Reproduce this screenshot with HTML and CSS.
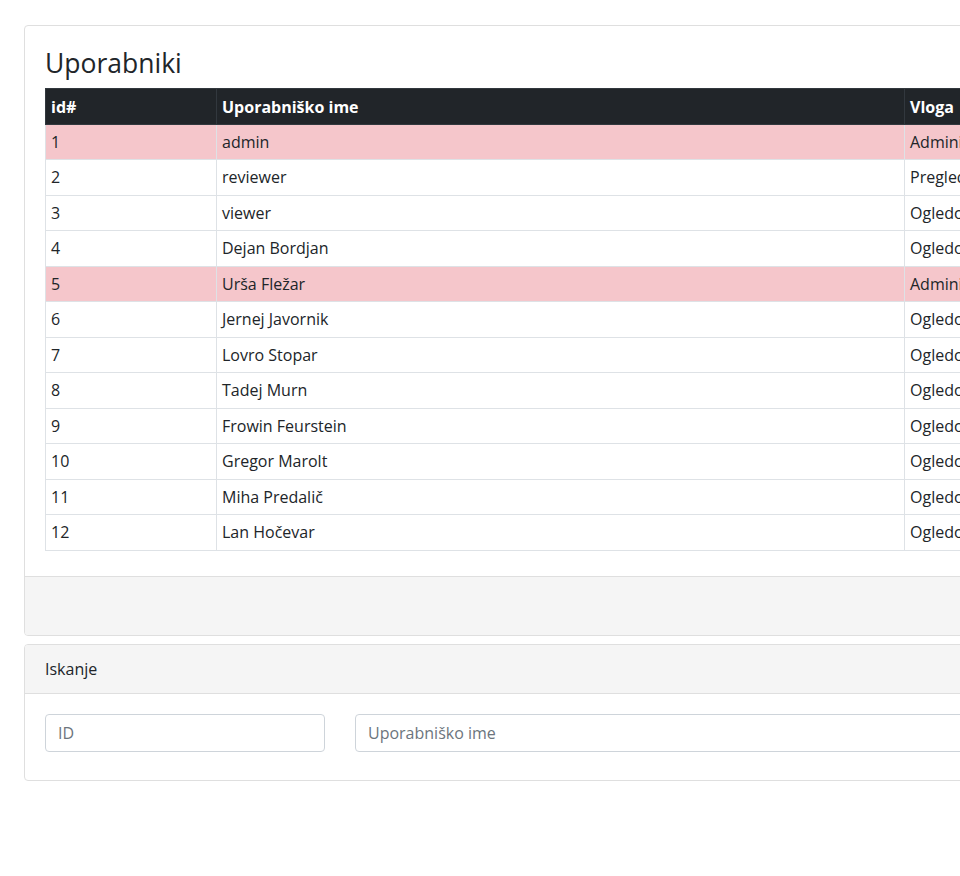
FILE: index.html
```html
<!DOCTYPE html>
<html lang="sl">
<head>
<meta charset="utf-8">
<title>Uporabniki</title>
<link rel="stylesheet" href="styles.css">
</head>
<body>
<div class="page">
  <div class="card">
    <div class="card-body">
      <h3 class="title">Uporabniki</h3>
      <table class="table">
        <colgroup>
          <col class="c-id">
          <col class="c-name">
          <col class="c-role">
        </colgroup>
        <thead>
          <tr><th>id#</th><th>Uporabniško ime</th><th>Vloga</th></tr>
        </thead>
        <tbody>
          <tr class="danger"><td>1</td><td>admin</td><td>Administrator</td></tr>
          <tr><td>2</td><td>reviewer</td><td>Pregledovalec</td></tr>
          <tr><td>3</td><td>viewer</td><td>Ogledovalec</td></tr>
          <tr><td>4</td><td>Dejan Bordjan</td><td>Ogledovalec</td></tr>
          <tr class="danger"><td>5</td><td>Urša Fležar</td><td>Administrator</td></tr>
          <tr><td>6</td><td>Jernej Javornik</td><td>Ogledovalec</td></tr>
          <tr><td>7</td><td>Lovro Stopar</td><td>Ogledovalec</td></tr>
          <tr><td>8</td><td>Tadej Murn</td><td>Ogledovalec</td></tr>
          <tr><td>9</td><td>Frowin Feurstein</td><td>Ogledovalec</td></tr>
          <tr><td>10</td><td>Gregor Marolt</td><td>Ogledovalec</td></tr>
          <tr><td>11</td><td>Miha Predalič</td><td>Ogledovalec</td></tr>
          <tr><td>12</td><td>Lan Hočevar</td><td>Ogledovalec</td></tr>
        </tbody>
      </table>
    </div>
    <div class="card-footer"></div>
  </div>

  <div class="card search">
    <div class="card-header">Iskanje</div>
    <div class="card-body search-body">
      <input class="form-control f-id" type="text" placeholder="ID">
      <input class="form-control f-name" type="text" placeholder="Uporabniško ime">
    </div>
  </div>
</div>
</body>
</html>
```

FILE: styles.css
```css
html, body {
  margin: 0;
  padding: 0;
  overflow: hidden;
}
body {
  font-family: "Open Sans", "Noto Sans", sans-serif;
  font-size: 16px;
  line-height: 24px;
  color: #212529;
  background: #fff;
}
.page {
  width: 1400px;
  padding: 25px 24px 0 24px;
}
.card {
  border: 1px solid #dfdfdf;
  border-radius: 4px;
  background: #fff;
  overflow: hidden;
}
.card-body {
  padding: 20px 20px 20px 20px;
}
.title {
  margin: 0 0 8px 0;
  font-size: 26.5px;
  line-height: 34px;
  font-weight: 400;
}
.table {
  width: 100%;
  table-layout: fixed;
  border-collapse: collapse;
  margin-bottom: 5px;
}
.c-id { width: 171px; }
.c-name { width: 688px; }
.table th, .table td {
  padding: 5px;
  text-align: left;
  vertical-align: top;
  white-space: nowrap;
  overflow: hidden;
  border: 1px solid #dee2e6;
}
.table th {
  background: #212529;
  color: #fff;
  font-weight: 700;
  border-color: #32383e;
  padding-top: 5.5px;
  padding-bottom: 5px;
}
.table td {
  padding-top: 5px;
  padding-bottom: 5px;
  height: 24.5px;
}
.table tr.danger td {
  background: #f5c6cb;
}
.card-footer {
  height: 58px;
  background: #f5f5f5;
  border-top: 1px solid #dfdfdf;
}
.search {
  margin-top: 8px;
}
.card-header {
  padding: 12px 20px;
  background: #f5f5f5;
  border-bottom: 1px solid #dfdfdf;
}
.search-body {
  display: flex;
  gap: 30px;
  padding: 20px 20px 28px 20px;
}
.form-control {
  box-sizing: border-box;
  height: 38px;
  padding: 6px 12px;
  font-family: inherit;
  font-size: 16px;
  line-height: 24px;
  color: #495057;
  background: #fff;
  border: 1px solid #ced4da;
  border-radius: 4px;
  margin: 0;
}
.form-control::placeholder {
  color: #6c757d;
  opacity: 1;
}
.f-id { width: 280px; }
.f-name { flex: 1; }
```
